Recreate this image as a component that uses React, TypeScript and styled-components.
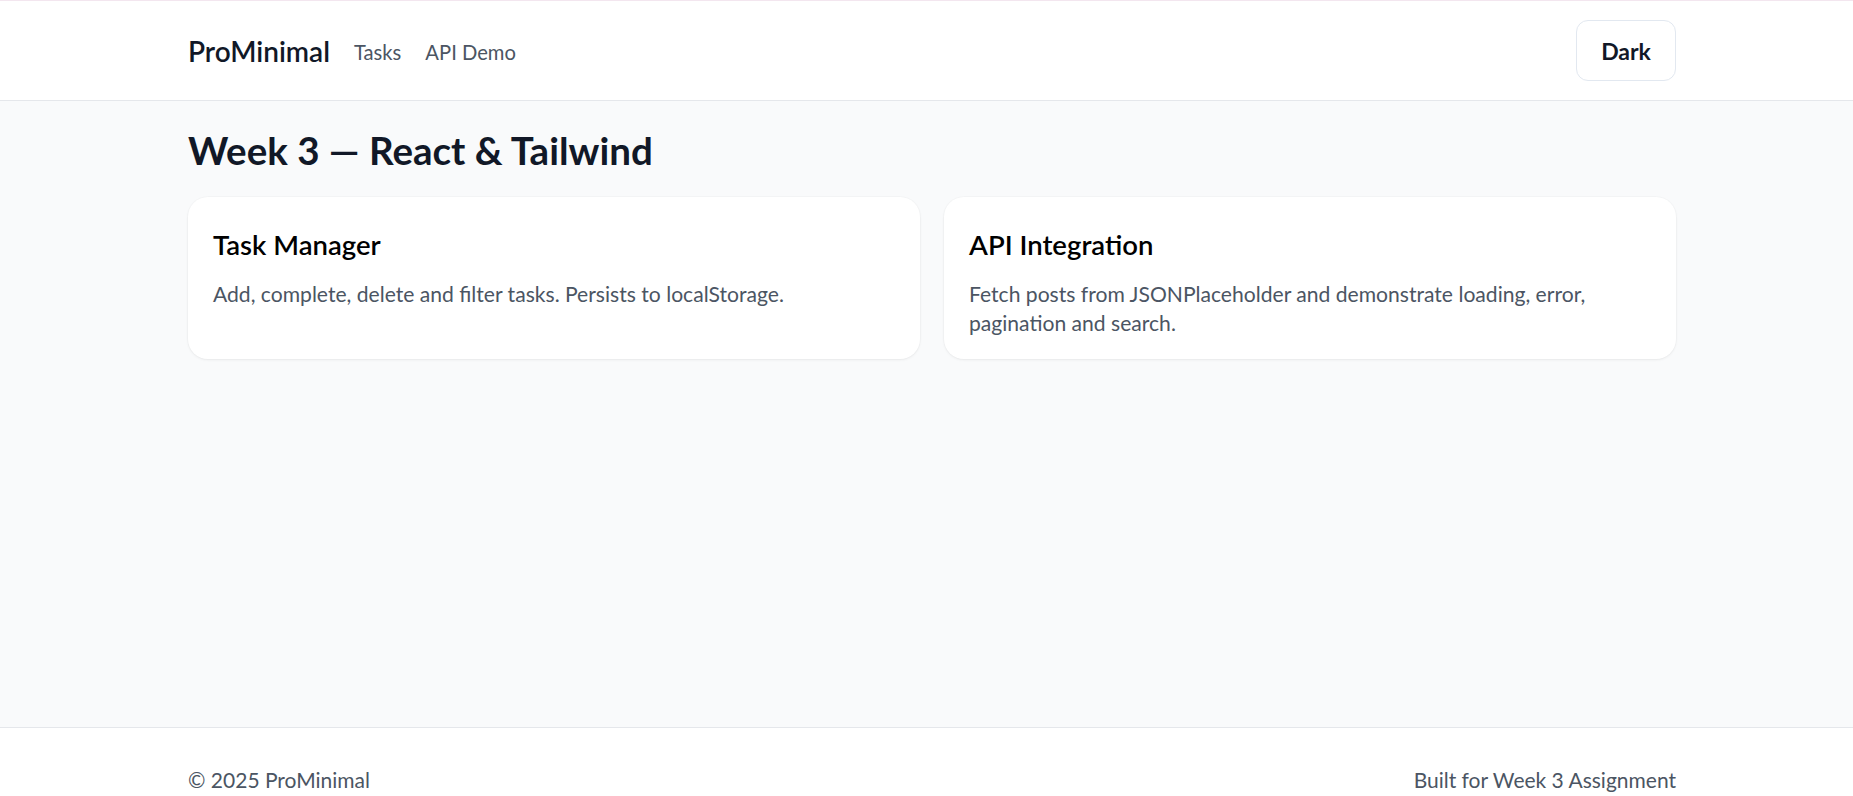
import React from "react";
import styled, { createGlobalStyle } from "styled-components";

const Global = createGlobalStyle`
  * { box-sizing: border-box; }
  html, body { margin: 0; padding: 0; }
  body {
    font-family: Lato, "Open Sans", "Noto Sans", sans-serif;
    background: #ffffff;
    color: #111827;
    border-top: 1px solid #f3e6ef;
  }
`;

const Page = styled.div`
  display: flex;
  flex-direction: column;
`;

const Container = styled.div`
  width: 100%;
  max-width: 1499px;
  margin: 0 auto;
  padding-left: 11px;
`;

const Header = styled.header`
  background: #ffffff;
  border-bottom: 1px solid #e5e7eb;
  padding: 19px 0 19px;
`;

const HeaderRow = styled(Container)`
  display: flex;
  align-items: center;
  justify-content: space-between;
`;

const NavLeft = styled.nav`
  display: flex;
  align-items: center;
  gap: 24px;
`;

const Brand = styled.span`
  font-size: 28px;
  font-weight: 600;
  color: #111827;
`;

const NavLink = styled.a`
  font-size: 20.2px;
  color: #4b5563;
  text-decoration: none;
  padding-top: 2px;
`;

const ThemeButton = styled.button`
  width: 100px;
  height: 61px;
  border: 1px solid #e2e8f0;
  border-radius: 12px;
  background: #ffffff;
  font-family: inherit;
  font-size: 23px;
  font-weight: 700;
  color: #111827;
  cursor: pointer;
`;

const Main = styled.main`
  background: #f9fafb;
  height: 626px;
  padding-top: 27px;
`;

const Title = styled.h1`
  margin: 0 0 24px;
  font-size: 38.5px;
  line-height: 45px;
  font-weight: 700;
  color: #111827;
`;

const Grid = styled.div`
  display: grid;
  grid-template-columns: 1fr 1fr;
  gap: 24px;
`;

const Card = styled.div`
  background: #ffffff;
  border-radius: 20px;
  box-shadow: 0 1px 3px rgba(0, 0, 0, 0.06), 0 0 0 1px rgba(0, 0, 0, 0.015);
  padding: 30px 25px 22px;
`;

const CardTitle = styled.h2`
  margin: 0 0 17px;
  font-size: 27.5px;
  line-height: 35px;
  font-weight: 600;
  color: #000000;
`;

const CardText = styled.p`
  margin: 0;
  font-size: 21.1px;
  line-height: 29px;
  color: #4b5563;
`;

const Footer = styled.footer`
  background: #ffffff;
  border-top: 1px solid #e5e7eb;
  padding: 37px 0 30px;
`;

const FooterRow = styled(Container)`
  display: flex;
  justify-content: space-between;
  font-size: 21px;
  line-height: 30px;
  color: #4b5563;
`;

const cards = [
  {
    title: "Task Manager",
    text: "Add, complete, delete and filter tasks. Persists to localStorage.",
  },
  {
    title: "API Integration",
    text: "Fetch posts from JSONPlaceholder and demonstrate loading, error, pagination and search.",
  },
];

export default function App() {
  return (
    <>
      <Global />
      <Page>
        <Header>
          <HeaderRow>
            <NavLeft>
              <Brand>ProMinimal</Brand>
              <NavLink href="#">Tasks</NavLink>
              <NavLink href="#">API Demo</NavLink>
            </NavLeft>
            <ThemeButton>Dark</ThemeButton>
          </HeaderRow>
        </Header>
        <Main>
          <Container>
            <Title>Week 3 — React &amp; Tailwind</Title>
            <Grid>
              {cards.map((c) => (
                <Card key={c.title}>
                  <CardTitle>{c.title}</CardTitle>
                  <CardText>{c.text}</CardText>
                </Card>
              ))}
            </Grid>
          </Container>
        </Main>
        <Footer>
          <FooterRow>
            <span>© 2025 ProMinimal</span>
            <span>Built for Week 3 Assignment</span>
          </FooterRow>
        </Footer>
      </Page>
    </>
  );
}
